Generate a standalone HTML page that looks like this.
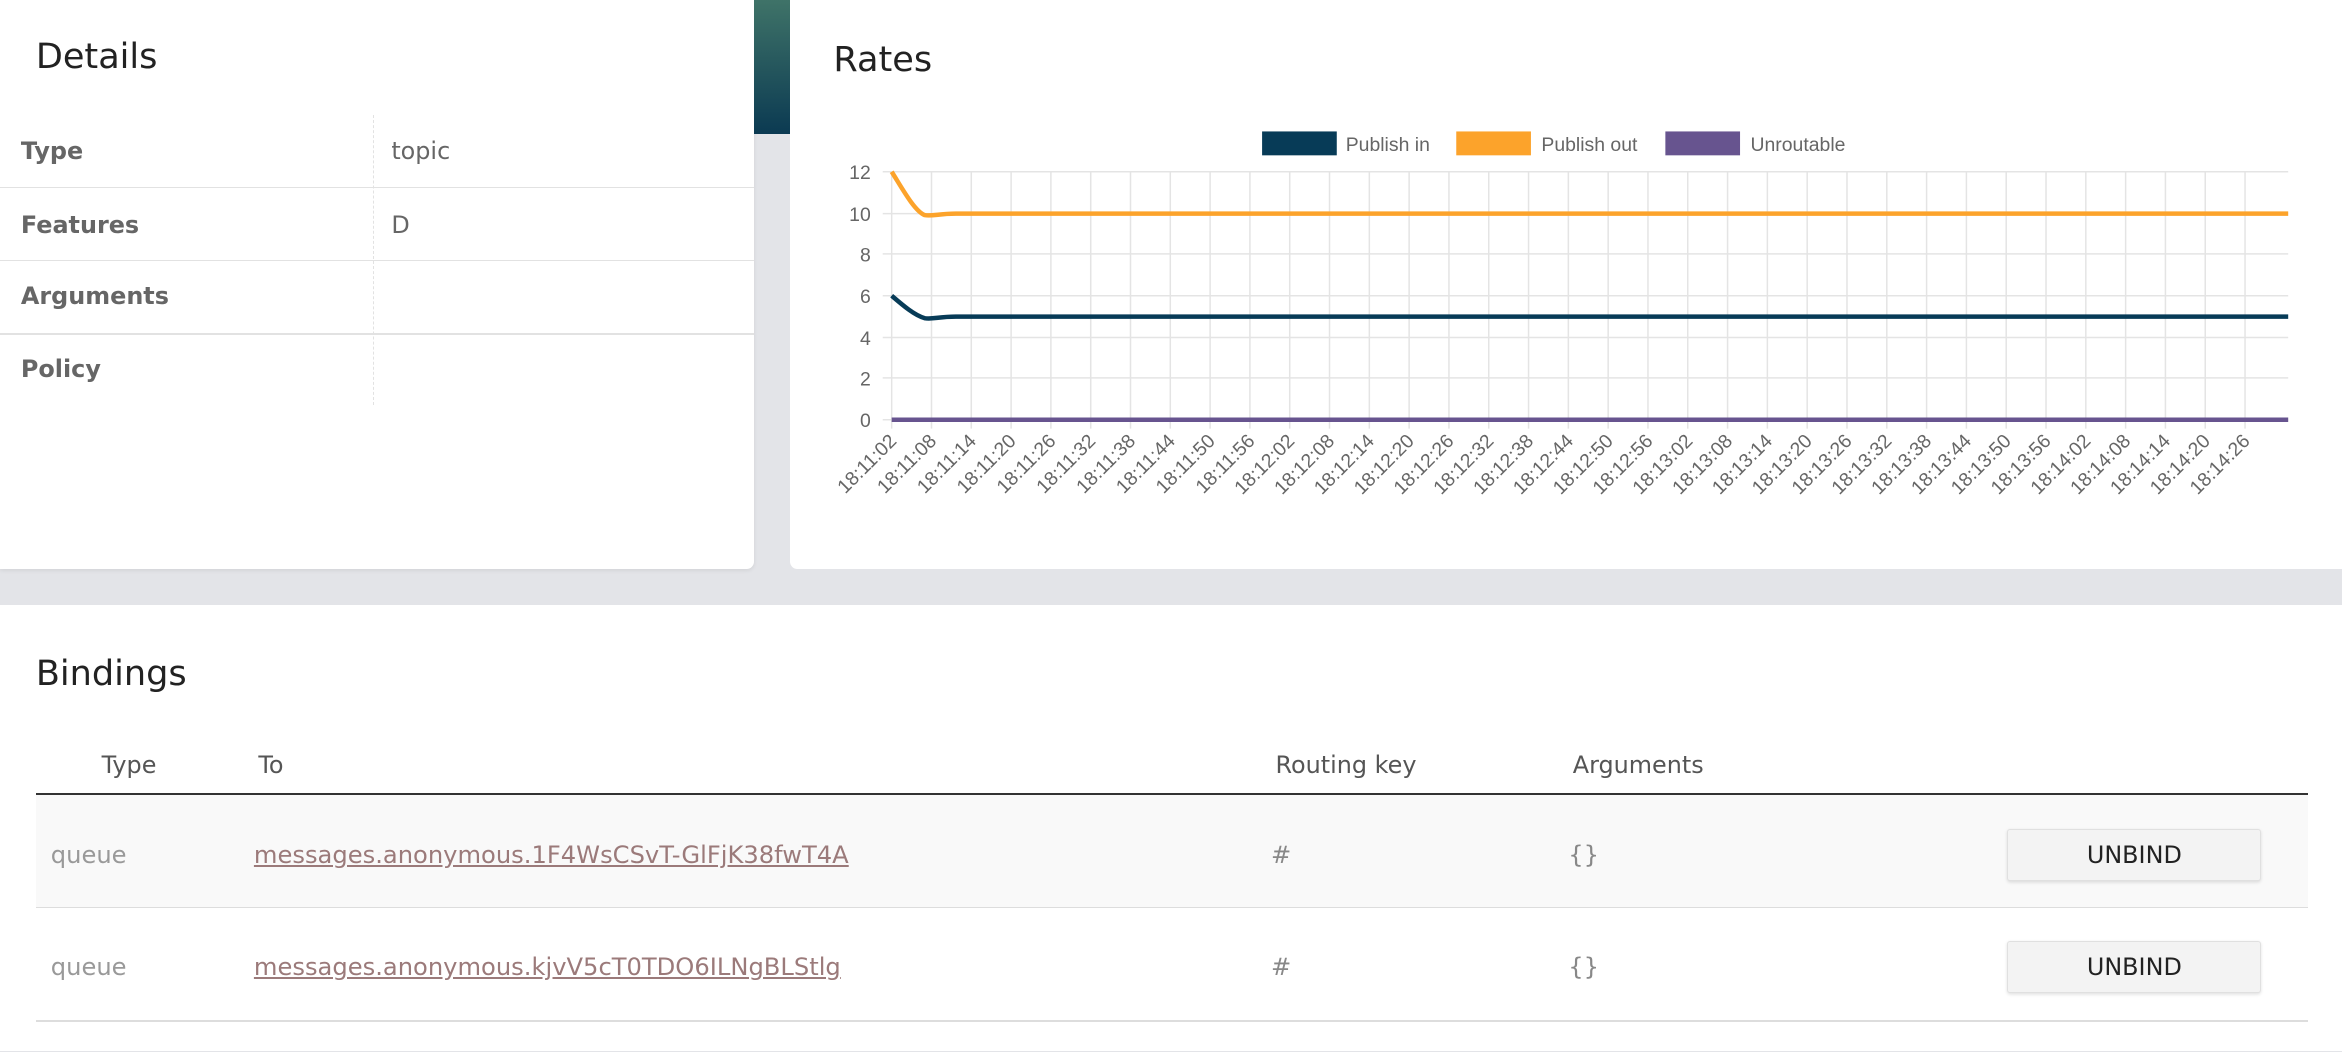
<!DOCTYPE html>
<html><head><meta charset="utf-8"><style>
html,body{margin:0;padding:0;}
body{width:2342px;height:1052px;overflow:hidden;background:#e3e4e8;}
#w{zoom:1.4936;width:1568px;height:704px;position:relative;font-family:"DejaVu Sans",sans-serif;}
.p{position:absolute;background:#fff;}
h2{position:absolute;margin:0;font-weight:normal;font-size:23.5px;color:#222;}
.lab{position:absolute;left:14px;font-weight:bold;font-size:16px;color:#666;}
.val{position:absolute;left:262px;font-size:16px;color:#666;}
.hl{position:absolute;left:0;width:505px;height:1px;background:#e2e2e2;}
.th{position:absolute;top:503px;font-size:16px;color:#555;}
.td{position:absolute;font-size:16.2px;color:#999;}
a{color:#9b7a7a;text-decoration:underline;}
.btn{position:absolute;left:1344px;width:170px;height:35px;background:#f3f3f3;border:1px solid #e0e0e0;border-radius:2px;box-shadow:0 1px 2px rgba(0,0,0,.12);box-sizing:border-box;text-align:center;line-height:34px;font-size:16px;color:#222;}
</style></head><body><div id="w">
<div class="p" style="left:0;top:0;width:505px;height:381px;border-radius:0 0 5px 0;box-shadow:0 1px 3px rgba(0,0,0,.08)">
<h2 style="left:24px;top:24px">Details</h2>
<div style="position:absolute;left:250px;top:77px;height:194px;border-left:1px dashed #e2e2e2"></div>
<div class="lab" style="top:92px">Type</div><div class="val" style="top:92px">topic</div>
<div class="hl" style="top:125px"></div>
<div class="lab" style="top:141px">Features</div><div class="val" style="top:141px">D</div>
<div class="hl" style="top:174px"></div>
<div class="lab" style="top:189px">Arguments</div>
<div class="hl" style="top:223px"></div>
<div class="lab" style="top:238px">Policy</div>
</div>
<div style="position:absolute;left:505px;top:0;width:24px;height:90px;background:linear-gradient(#3f7368,#0b3a52)"></div>
<div class="p" style="left:529px;top:0;width:1039px;height:381px;border-radius:0 0 0 5px">
<h2 style="left:29px;top:26px">Rates</h2>
</div>
<svg style="position:absolute;left:0;top:0" width="1568" height="381" font-family="Liberation Sans, sans-serif">
<g font-size="13" fill="#666">
<rect x="845" y="88" width="50" height="16" fill="#073b57"/><text x="901" y="101">Publish in</text>
<rect x="975" y="88" width="50" height="16" fill="#fca32b"/><text x="1032" y="101">Publish out</text>
<rect x="1115" y="88" width="50" height="16" fill="#67548f"/><text x="1172" y="101">Unroutable</text>
</g>
<g stroke="#e4e4e4" stroke-width="1" id="grid"></g>
<g font-size="13" fill="#666" text-anchor="end">
<text x="583" y="120">12</text><text x="583" y="148">10</text><text x="583" y="175">8</text><text x="583" y="203">6</text><text x="583" y="231">4</text><text x="583" y="258">2</text><text x="583" y="286">0</text>
</g>
<g id="xl" font-size="13" fill="#666" text-anchor="end"></g>
<path d="M597 115 C604 126 612 141 619 144 C624 145 628 143 640 143 L1532 143" stroke="#fca32b" stroke-width="3" fill="none"/>
<path d="M597 198 C604 204 612 211 619 213 C624 214 628 212 640 212 L1532 212" stroke="#073b57" stroke-width="3" fill="none"/>
<path d="M597 281 L1532 281" stroke="#67548f" stroke-width="3" fill="none"/>
</svg>
<div class="p" style="left:0;top:405px;width:1568px;height:299px"></div>
<h2 style="left:24px;top:437px">Bindings</h2>
<div class="th" style="left:68px">Type</div><div class="th" style="left:173px">To</div>
<div class="th" style="left:854px">Routing key</div><div class="th" style="left:1053px">Arguments</div>
<div style="position:absolute;left:24px;top:531px;width:1521px;height:1px;background:#333"></div>
<div style="position:absolute;left:24px;top:532px;width:1521px;height:75px;background:#f9f9f9;border-bottom:1px solid #ddd"></div>
<div style="position:absolute;left:24px;top:683px;width:1521px;height:1px;background:#ddd"></div>
<div class="td" style="left:34px;top:563px">queue</div>
<div class="td" style="left:170px;top:563px"><a>messages.anonymous.1F4WsCSvT-GlFjK38fwT4A</a></div>
<div class="td" style="left:851px;top:563px;color:#888">#</div>
<div class="td" style="left:1050px;top:563px;color:#888">{}</div>
<div class="btn" style="top:555px">UNBIND</div>
<div class="td" style="left:34px;top:638px">queue</div>
<div class="td" style="left:170px;top:638px"><a>messages.anonymous.kjvV5cT0TDO6ILNgBLStlg</a></div>
<div class="td" style="left:851px;top:638px;color:#888">#</div>
<div class="td" style="left:1050px;top:638px;color:#888">{}</div>
<div class="btn" style="top:630px">UNBIND</div>
</div>
<script>
var g=document.getElementById('grid'),xl=document.getElementById('xl'),s='';
[115,143,170,198,226,253,281].forEach(function(y){s+='<line x1="591" x2="1532" y1="'+y+'" y2="'+y+'"/>';});
var t='';
for(var i=0;i<35;i++){var x=597+i*26.65;s+='<line x1="'+x+'" x2="'+x+'" y1="115" y2="287"/>';
var sec=2+i*6,m=11+Math.floor(sec/60);sec%=60;var lbl='18:'+m+':'+(sec<10?'0':'')+sec;
t+='<text transform="translate('+(x+4)+',296) rotate(-45)">'+lbl+'</text>';}
g.innerHTML=s;xl.innerHTML=t;
</script>
</body></html>
